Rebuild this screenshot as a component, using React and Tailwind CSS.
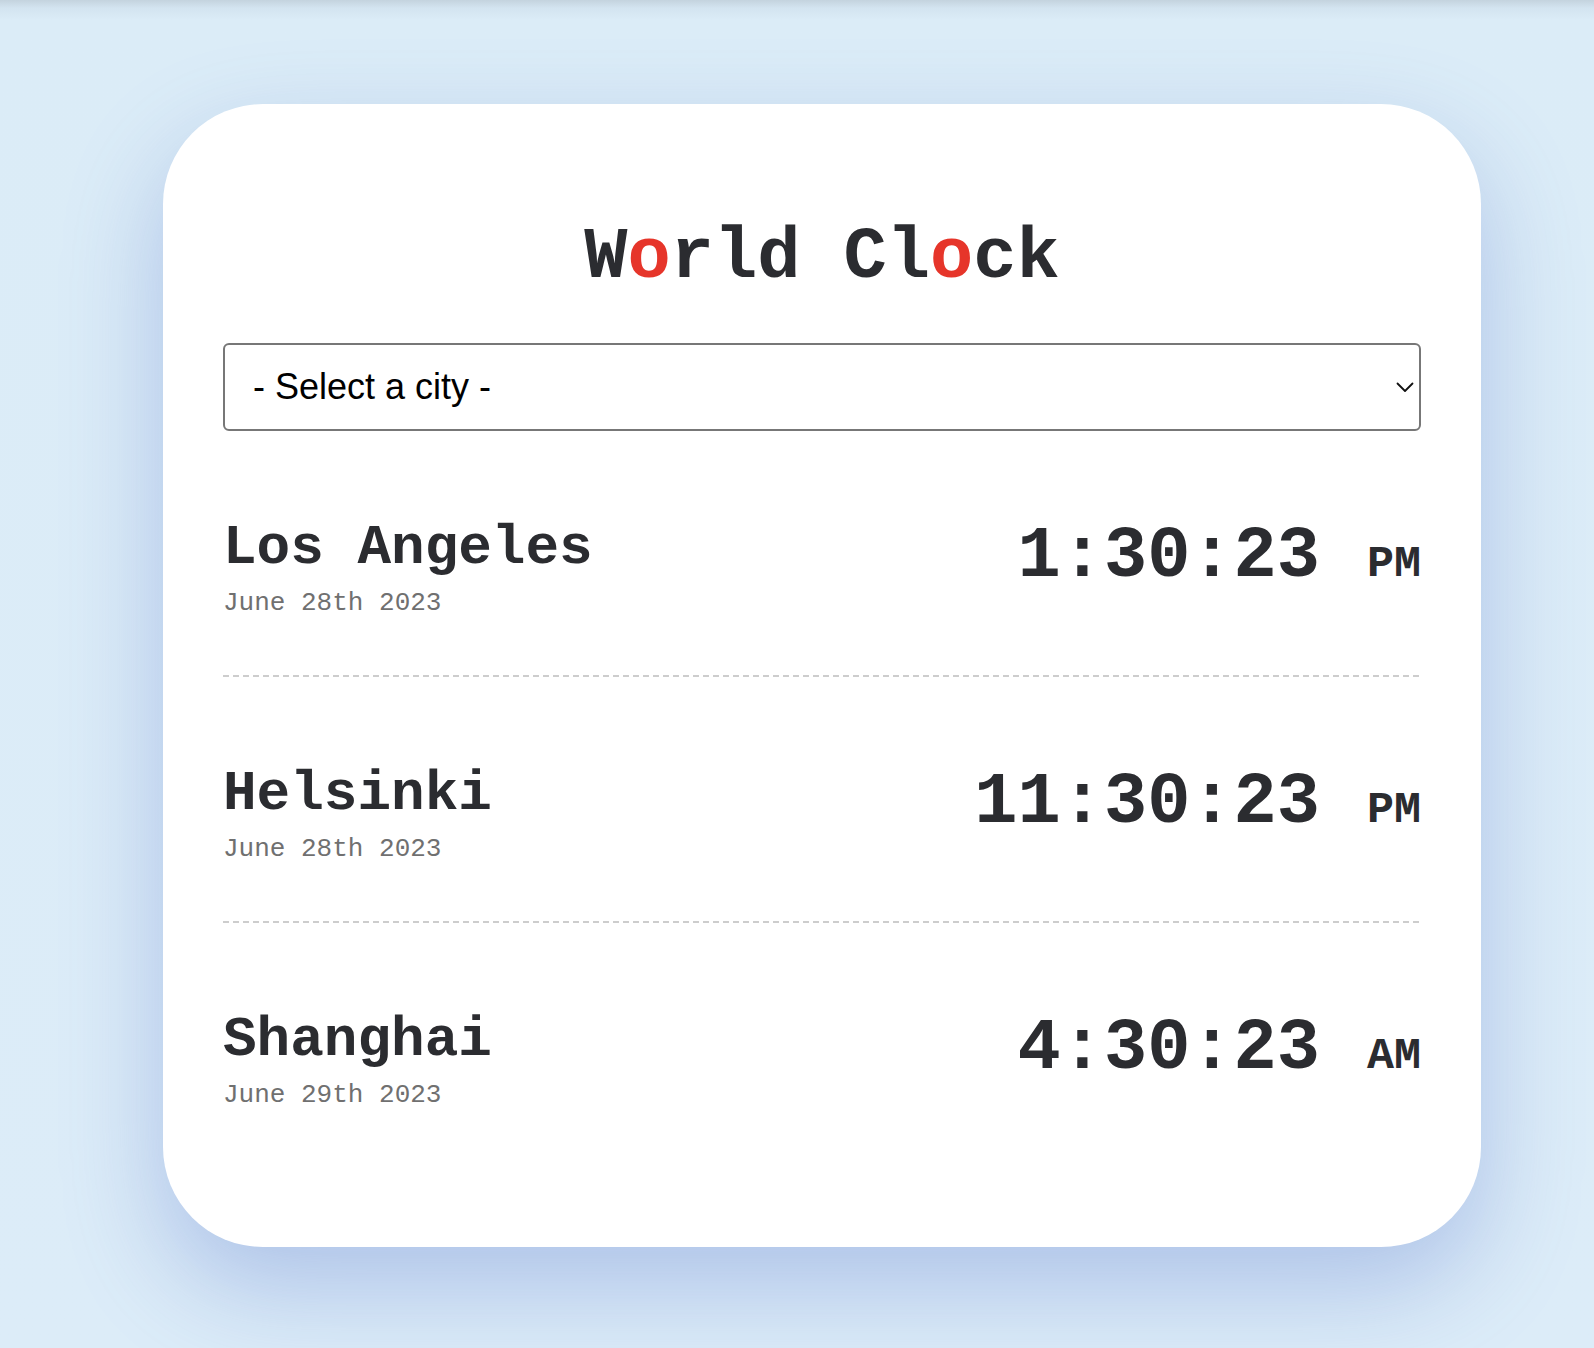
import React from "react";

const cities = [
  { name: "Los Angeles", date: "June 28th 2023", time: "1:30:23", ampm: "PM" },
  { name: "Helsinki", date: "June 28th 2023", time: "11:30:23", ampm: "PM" },
  { name: "Shanghai", date: "June 29th 2023", time: "4:30:23", ampm: "AM" },
];

export default function App() {
  return (
    <div className="min-h-[1348px] w-full bg-[linear-gradient(to_bottom,#c4d3de_0px,#d3e4f0_8px,#dbecf7_20px,#dcecf8_100%)] pt-[104px] pl-[163px] font-['Liberation_Mono',monospace] text-[#2b2c30]">
      <div className="w-[1318px] rounded-[100px] bg-white px-[60px] pt-[118px] pb-[139px] shadow-[0_40px_100px_rgba(80,110,200,0.33)]">
        <h1 className="text-center text-[72px] leading-[72px] font-bold">
          W<span className="text-[#e6352a]">o</span>rld Cl
          <span className="text-[#e6352a]">o</span>ck
        </h1>
        <div className="relative mt-[49px]">
          <select
            defaultValue=""
            className="h-[88px] w-full appearance-none rounded-md border-2 border-[#777777] bg-white pl-[28px] pr-[40px] font-['Liberation_Sans',Arial,sans-serif] text-[36px] text-black outline-none"
          >
            <option value="">- Select a city -</option>
            <option value="la">Los Angeles</option>
            <option value="hel">Helsinki</option>
            <option value="sh">Shanghai</option>
          </select>
          <svg
            className="pointer-events-none absolute right-[7px] top-[39px]"
            width="18"
            height="11"
            viewBox="0 0 18 11"
            fill="none"
          >
            <path d="M1.5 1.5 L9 9 L16.5 1.5" stroke="#111" strokeWidth="1.8" strokeLinecap="round" strokeLinejoin="round" />
          </svg>
        </div>
        <div>
          {cities.map((c, i) => (
            <div
              key={c.name}
              className={
                i < cities.length - 1
                  ? "pt-[89px] pb-[59px] bg-[repeating-linear-gradient(to_right,#cdcdcd_0px,#cdcdcd_6px,transparent_6px,transparent_10px)] bg-[length:100%_2px] bg-bottom bg-no-repeat"
                  : "pt-[89px]"
              }
            >
              <div className={i < cities.length - 1 ? "flex items-start justify-between pb-[2px]" : "flex items-start justify-between"}>
                <div>
                  <div className="text-[56px] leading-[56px] font-bold">{c.name}</div>
                  <div className="mt-[14px] text-[26px] leading-[26px] text-[#707070]">{c.date}</div>
                </div>
                <div className="mt-[1px] flex items-baseline">
                  <span className="text-[72px] leading-[72px] font-bold">{c.time}</span>
                  <span className="ml-[47px] text-[45px] leading-[45px] font-bold">{c.ampm}</span>
                </div>
              </div>
            </div>
          ))}
        </div>
      </div>
    </div>
  );
}
